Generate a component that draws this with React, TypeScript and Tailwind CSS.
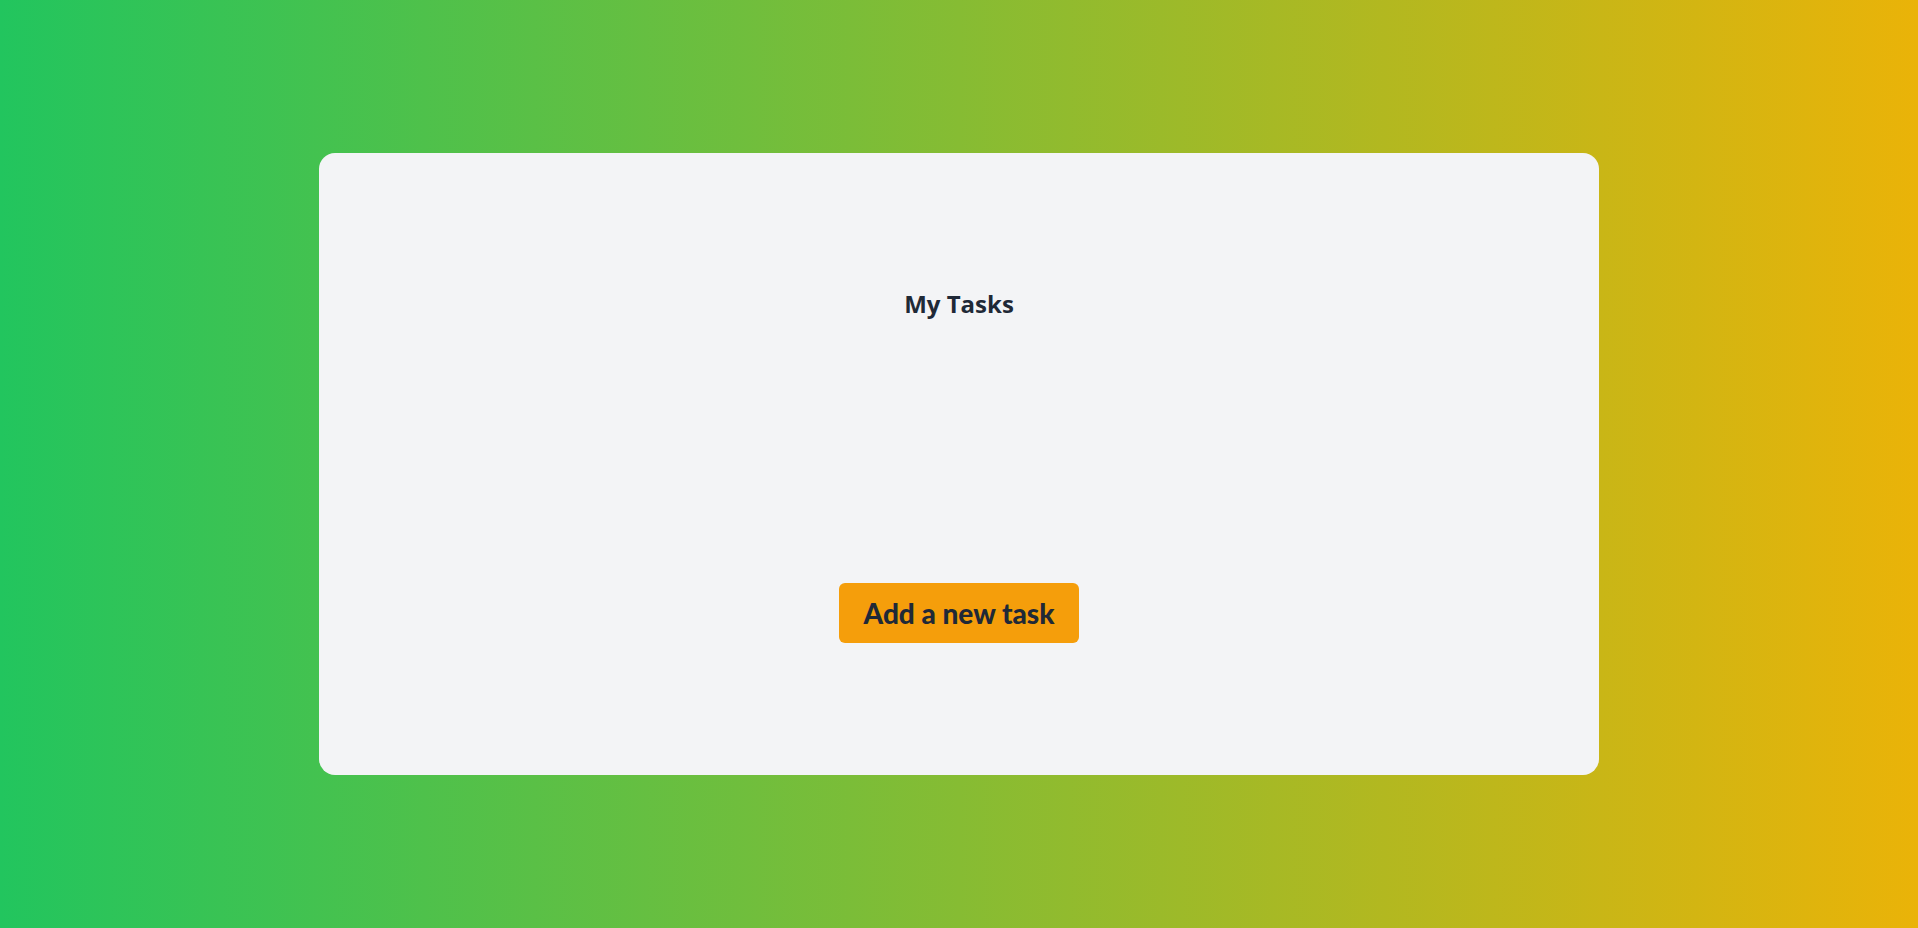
export default function App() {
  return (
    <div className="flex h-[928px] w-full items-center justify-center bg-[linear-gradient(to_right,#22c55e,#eab308)] font-['Open_Sans',sans-serif] text-[#1f2937]">
      <div className="flex h-[622px] w-full max-w-7xl flex-col items-center rounded-2xl bg-[#f3f4f6] pt-[135px]">
        <h1 className="text-2xl leading-8 font-bold">My Tasks</h1>
        <button className="mt-[263px] h-[60px] w-[240px] rounded-md bg-[#f59e0b] font-['Lato',sans-serif] text-[28px] leading-9 font-black">
          Add a new task
        </button>
      </div>
    </div>
  );
}
